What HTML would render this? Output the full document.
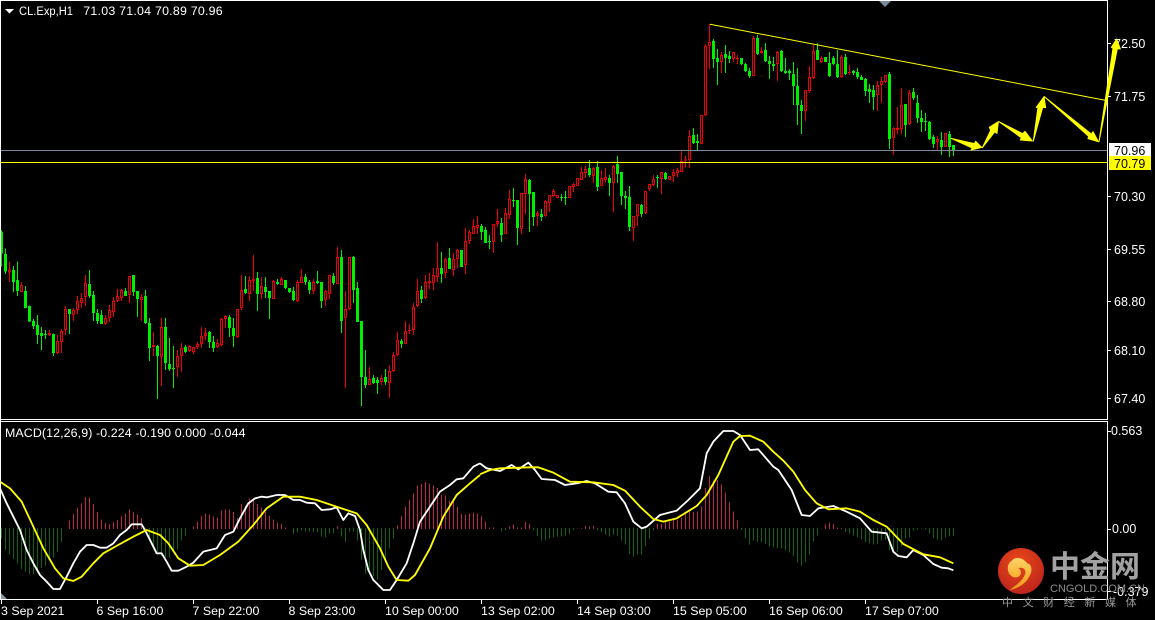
<!DOCTYPE html>
<html lang="zh"><head><meta charset="utf-8"><title>CL.Exp,H1</title>
<style>
html,body{margin:0;padding:0;background:#000;width:1155px;height:620px;overflow:hidden}
svg{display:block}
.c path{fill:none;shape-rendering:crispEdges}
.gw{stroke:#00ee00;stroke-width:3}.gb{stroke:#00ee00;stroke-width:9}
.rw{stroke:#f00000;stroke-width:3}.rb{stroke:#f00000;stroke-width:9}.ri{stroke:#000;stroke-width:3}
.hr{fill:none;stroke:#c0254a;stroke-width:3;shape-rendering:crispEdges}.hg{fill:none;stroke:#0f640f;stroke-width:3;shape-rendering:crispEdges}
.lw{fill:none;stroke:#fff;stroke-width:5.5;stroke-linejoin:round}.ly{fill:none;stroke:#ff0;stroke-width:5.5;stroke-linejoin:round}
text{font-family:"Liberation Sans","Noto Sans CJK SC",sans-serif;font-size:12.4px;fill:#fff}
.ax{font-size:12.5px}
</style></head><body>
<svg width="1155" height="620" viewBox="0 0 1155 620" xmlns="http://www.w3.org/2000/svg">
<rect width="1155" height="620" fill="#000"/>

<g class="c" transform="scale(.33333)">
<path class="gw" d="M4.5 30V140M16.5 85V162M40.5 138V216M52.5 124V228M76.5 198V264M88.5 256V306M100.5 297V327M112.5 285V372M124.5 321V390M136.5 330V357M160.5 340V408M208.5 267V342M268.5 150V234M280.5 213V303M292.5 267V312M304.5 270V312M376.5 204V228M400.5 165V228M412.5 213V291M436.5 210V312M448.5 294V423M472.5 375V537M496.5 294V450M508.5 354V453M520.5 378V504M556.5 375V399M628.5 333V384M640.5 348V396M688.5 285V351M700.5 294V381M736.5 168V222M772.5 156V273M796.5 171V234M808.5 213V297M832.5 177V195M856.5 180V207M868.5 204V219M880.5 201V243M916.5 162V195M928.5 180V222M952.5 153V192M964.5 186V264M1000.5 159V195M1024.5 90V339M1060.5 108V249M1072.5 186V306M1084.5 303V558M1096.5 390V504M1120.5 465V492M1132.5 471V522M1156.5 447V495" transform="translate(0,660)"/>
<path class="gb" d="M4.5 36V100M16.5 102V155M40.5 150V186M52.5 180V213M76.5 213V264M88.5 258V304M100.5 303V318M112.5 315V345M124.5 339V348M136.5 342V345M160.5 342V399M208.5 267V282M268.5 192V228M280.5 225V279M292.5 279V303M304.5 285V312M376.5 213V228M400.5 165V216M412.5 213V237M436.5 228V309M448.5 309V384M472.5 378V408M496.5 321V429M508.5 432V447M520.5 444V447M556.5 381V396M628.5 336V366M640.5 366V384M688.5 291V324M700.5 324V348M736.5 207V219M772.5 174V222M796.5 201V216M808.5 213V234M832.5 186V192M856.5 180V204M868.5 204V216M880.5 213V240M916.5 171V186M928.5 186V210M952.5 183V189M964.5 186V243M1000.5 168V189M1024.5 111V303M1060.5 111V210M1072.5 204V306M1084.5 303V471M1096.5 471V495M1120.5 474V489M1132.5 480V489M1156.5 471V486" transform="translate(0,660)"/>
<path class="rw" d="M28.5 124V186M64.5 186V216M148.5 330V348M172.5 345V402M184.5 327V399M196.5 258V345M220.5 264V303M232.5 228V282M244.5 219V264M256.5 165V258M316.5 285V315M328.5 255V306M340.5 231V291M352.5 207V246M364.5 207V243M388.5 168V249M424.5 222V303M460.5 336V408M484.5 294V498M532.5 390V471M544.5 369V456M568.5 375V396M580.5 381V402M592.5 366V387M604.5 321V384M616.5 324V360M652.5 357V384M664.5 294V378M676.5 285V324M712.5 267V354M724.5 165V270M748.5 168V243M760.5 105V213M784.5 171V237M820.5 180V237M844.5 171V195M892.5 180V246M904.5 147V189M940.5 177V222M976.5 210V258M988.5 165V237M1012.5 81V192M1036.5 213V504M1048.5 111V270M1108.5 441V495M1144.5 465V495M1168.5 435V534M1180.5 396V456M1192.5 336V408" transform="translate(0,660)"/>
<path class="rb" d="M28.5 148V158M64.5 195V216M148.5 339V345M172.5 363V399M184.5 333V366M196.5 267V330M220.5 270V285M232.5 243V270M244.5 234V249M256.5 189V231M316.5 294V312M328.5 270V294M340.5 243V276M352.5 228V243M364.5 210V234M388.5 168V225M424.5 231V240M460.5 375V381M484.5 321V411M532.5 408V441M544.5 384V408M568.5 378V393M580.5 381V396M592.5 372V381M604.5 348V372M616.5 339V348M652.5 369V381M664.5 297V375M676.5 288V297M712.5 267V351M724.5 210V264M748.5 180V222M760.5 177V183M784.5 198V222M820.5 183V237M844.5 177V195M892.5 186V243M904.5 171V189M940.5 186V213M976.5 213V240M988.5 165V222M1012.5 111V192M1036.5 267V294M1048.5 111V267M1108.5 477V495M1144.5 474V486M1168.5 453V489M1180.5 405V453M1192.5 360V405" transform="translate(0,660)"/>
<path class="ri" d="M28.5 151V155M64.5 198V213M172.5 366V396M184.5 336V363M196.5 270V327M220.5 273V282M232.5 246V267M244.5 237V246M256.5 192V228M316.5 297V309M328.5 273V291M340.5 246V273M352.5 231V240M364.5 213V231M388.5 171V222M424.5 234V237M484.5 324V408M532.5 411V438M544.5 387V405M568.5 381V390M580.5 384V393M592.5 375V378M604.5 351V369M616.5 342V345M652.5 372V378M664.5 300V372M676.5 291V294M712.5 270V348M724.5 213V261M748.5 183V219M784.5 201V219M820.5 186V234M844.5 180V192M892.5 189V240M904.5 174V186M940.5 189V210M976.5 216V237M988.5 168V219M1012.5 114V189M1036.5 270V291M1048.5 114V264M1108.5 480V492M1144.5 477V483M1168.5 456V486M1180.5 408V450M1192.5 363V402" transform="translate(0,660)"/>
</g>

<g class="c" transform="translate(395,230) scale(.33333)">
<path class="gw" d="M19.5 327V354M79.5 168V219M139.5 66V159M163.5 54V117M199.5 60V111"/>
<path class="gb" d="M19.5 333V342M79.5 180V207M139.5 114V132M163.5 84V117M199.5 60V111"/>
<path class="rw" d="M31.5 273V342M43.5 282V312M55.5 219V315M67.5 147V231M91.5 135V207M103.5 129V177M115.5 114V180M127.5 36V156M151.5 84V144M175.5 69V138M187.5 57V114"/>
<path class="rb" d="M31.5 303V342M43.5 300V303M55.5 231V300M67.5 183V228M91.5 156V204M103.5 153V159M115.5 135V159M127.5 114V141M151.5 87V129M175.5 87V120M187.5 60V87"/>
<path class="ri" d="M31.5 306V339M55.5 234V297M67.5 186V225M91.5 159V201M115.5 138V156M127.5 117V138M151.5 90V126M175.5 90V117M187.5 63V84"/>
</g>

<g class="c" transform="translate(400,120) scale(.33333)">
<path class="gw" d="M244.5 312V360M256.5 321V369M268.5 345V387M304.5 294V366M340.5 204V261M352.5 240V375M388.5 177V336M400.5 216V318M424.5 267V303M484.5 222V243M496.5 213V255M568.5 120V171M592.5 123V213M628.5 165V228M652.5 108V189M664.5 156V255M676.5 213V267M688.5 198V333M724.5 252V291M772.5 165V204M796.5 156V180"/>
<path class="gb" d="M244.5 318V336M256.5 330V369M268.5 363V366M304.5 309V345M340.5 240V243M352.5 240V324M388.5 180V222M400.5 216V291M424.5 282V291M484.5 231V234M496.5 231V234M568.5 144V165M592.5 141V201M628.5 174V189M652.5 132V162M664.5 156V228M676.5 228V234M688.5 231V321M724.5 255V282M772.5 171V174M796.5 159V177"/>
<path class="rw" d="M196.5 324V462M208.5 330V372M220.5 297V342M232.5 288V342M280.5 312V399M292.5 267V321M316.5 264V342M328.5 210V297M364.5 219V342M376.5 162V282M412.5 273V318M436.5 240V291M448.5 225V276M460.5 207V231M472.5 225V234M508.5 198V234M520.5 189V216M532.5 174V198M544.5 141V180M556.5 138V174M580.5 141V189M604.5 150V198M616.5 144V189M640.5 135V276M700.5 288V363M712.5 252V318M736.5 213V282M748.5 192V213M760.5 165V198M784.5 156V222M808.5 168V180M820.5 147V186M832.5 144V171"/>
<path class="rb" d="M196.5 363V435M208.5 336V363M220.5 318V342M232.5 315V324M280.5 312V366M292.5 303V312M316.5 279V342M328.5 237V285M364.5 219V327M376.5 177V222M412.5 279V288M436.5 243V288M448.5 225V249M460.5 213V228M472.5 225V234M508.5 198V234M520.5 192V201M532.5 174V198M544.5 156V180M556.5 147V159M580.5 144V168M604.5 174V198M616.5 171V180M640.5 138V189M700.5 288V324M712.5 252V288M736.5 213V279M748.5 192V207M760.5 177V195M784.5 156V177M808.5 168V180M820.5 156V168M832.5 150V159"/>
<path class="ri" d="M196.5 366V432M208.5 339V360M220.5 321V339M232.5 318V321M280.5 315V363M292.5 306V309M316.5 282V339M328.5 240V282M364.5 222V324M376.5 180V219M412.5 282V285M436.5 246V285M448.5 228V246M460.5 216V225M472.5 228V231M508.5 201V231M520.5 195V198M532.5 177V195M544.5 159V177M556.5 150V156M580.5 147V165M604.5 177V195M616.5 174V177M640.5 141V186M700.5 291V321M712.5 255V285M736.5 216V276M748.5 195V204M760.5 180V192M784.5 159V174M808.5 171V177M820.5 159V165M832.5 153V156"/>
</g>

<g class="c" transform="translate(680,0) scale(.33333)">
<path class="gw" d="M40.5 384V432M52.5 402V450M100.5 117V204M112.5 147V255M136.5 135V219M148.5 153V189M184.5 174V195M196.5 189V216M208.5 204V234M232.5 105V165M256.5 129V186M268.5 168V237M280.5 171V213M304.5 150V216M316.5 174V222M328.5 207V240M340.5 186V315M352.5 204V375M364.5 300V402M412.5 129V180M436.5 171V186M448.5 156V231M460.5 168V195M472.5 150V234M496.5 162V225M520.5 210V225M532.5 204V237M544.5 225V240M556.5 234V288M568.5 252V309M580.5 255V330M628.5 216V447M676.5 312V411M700.5 264V300M712.5 285V369M724.5 330V396M736.5 339V393M748.5 363V420M760.5 405V444M784.5 396V465M808.5 393V471M820.5 435V468"/>
<path class="gb" d="M40.5 405V429M52.5 423V429M100.5 123V177M112.5 174V186M136.5 162V174M148.5 168V177M184.5 174V192M196.5 192V213M208.5 213V228M232.5 114V162M256.5 150V183M268.5 183V192M280.5 192V198M304.5 153V213M316.5 213V219M328.5 213V219M340.5 222V258M352.5 258V315M364.5 315V333M412.5 150V180M436.5 171V186M448.5 189V228M460.5 174V192M472.5 192V231M496.5 171V222M520.5 213V219M532.5 216V231M544.5 231V240M556.5 237V273M568.5 267V276M580.5 270V291M628.5 222V417M676.5 312V375M700.5 276V294M712.5 309V354M724.5 354V366M736.5 363V366M748.5 366V417M760.5 411V432M784.5 420V441M808.5 402V441M820.5 435V453"/>
<path class="rw" d="M4.5 450V516M16.5 467V503M28.5 390V504M64.5 345V432M76.5 132V348M88.5 72V207M124.5 156V219M160.5 156V186M172.5 165V192M220.5 108V228M244.5 141V162M292.5 153V243M376.5 270V363M388.5 198V279M400.5 135V237M424.5 168V189M484.5 165V234M508.5 195V225M592.5 243V333M604.5 231V309M616.5 225V249M640.5 381V465M652.5 321V402M664.5 264V402M688.5 270V375M772.5 408V453M796.5 399V441"/>
<path class="rb" d="M4.5 483V516M16.5 478V481M28.5 408V480M64.5 345V432M76.5 138V345M88.5 126V138M124.5 165V186M160.5 156V177M172.5 174V177M220.5 114V228M244.5 153V159M292.5 156V192M376.5 270V333M388.5 231V273M400.5 153V234M424.5 174V186M484.5 171V231M508.5 216V219M592.5 255V285M604.5 243V255M616.5 225V246M640.5 384V414M652.5 384V390M664.5 315V387M688.5 279V372M772.5 417V426M796.5 399V441"/>
<path class="ri" d="M4.5 486V513M28.5 411V477M64.5 348V429M76.5 141V342M88.5 129V135M124.5 168V183M160.5 159V174M220.5 117V225M292.5 159V189M376.5 273V330M388.5 234V270M400.5 156V231M424.5 177V183M484.5 174V228M592.5 258V282M604.5 246V252M616.5 228V243M640.5 387V411M664.5 318V384M688.5 282V369M772.5 420V423M796.5 402V438"/>
</g>

<!-- horizontal levels and trend line -->
<path d="M1 150.5H1108" stroke="#7a8a9c" stroke-width="1" shape-rendering="crispEdges"/>
<path d="M1 162.5H1108" stroke="#ffff00" stroke-width="1" shape-rendering="crispEdges"/>
<path d="M710 24.3L1107 100.6" stroke="#ffff00" stroke-width="1"/>

<!-- MACD histogram and lines -->
<g transform="translate(0,420) scale(.33333)">
<path class="hg" d="M4.5 324V355M16.5 324V388M28.5 324V403M40.5 324V417M52.5 324V430M64.5 324V447M76.5 324V454M88.5 324V462M100.5 324V462M112.5 324V457M124.5 324V444M136.5 324V436M148.5 324V420M160.5 324V412M172.5 324V396M184.5 324V366M448.5 324V352M460.5 324V384M472.5 324V396M484.5 324V408M496.5 324V412M508.5 324V412M520.5 324V396M532.5 324V388M544.5 324V362M556.5 324V346M880.5 324V342M892.5 324V336M904.5 324V332M916.5 324V334M928.5 324V334M940.5 324V336M952.5 324V338M964.5 324V350M976.5 324V352M988.5 324V340M1000.5 324V340M1024.5 324V350M1036.5 324V366M1048.5 324V334M1060.5 324V334M1072.5 324V362M1084.5 324V418M1096.5 324V462M1108.5 324V462M1120.5 324V468M1132.5 324V478M1144.5 324V450M1156.5 324V420M1168.5 324V386M1180.5 324V356"/>
<path class="hr" d="M208.5 302V327M220.5 282V327M232.5 264V327M244.5 250V327M256.5 231V327M268.5 232V327M280.5 252V327M292.5 276V327M304.5 298V327M316.5 309V327M328.5 312V327M340.5 306V327M352.5 300V327M364.5 288V327M376.5 280V327M388.5 268V327M400.5 276V327M412.5 284V327M424.5 294V327M436.5 325V327M580.5 320V327M592.5 304V327M604.5 288V327M616.5 280V327M628.5 284V327M640.5 290V327M652.5 292V327M664.5 272V327M676.5 268V327M688.5 268V327M700.5 276V327M712.5 294V327M724.5 252V327M736.5 256V327M748.5 236V327M760.5 238V327M772.5 252V327M784.5 262V327M796.5 276V327M808.5 288V327M820.5 298V327M832.5 308V327M844.5 312V327M856.5 322V327M1012.5 320V327M1192.5 316V327M1204.5 288V327M1216.5 260V327M1228.5 240V327M1240.5 220V327M1252.5 196V327M1264.5 192V327M1276.5 186V327M1288.5 190V327M1300.5 196V327M1312.5 204V327M1324.5 224V327M1336.5 226V327M1348.5 242V327M1360.5 244V327M1372.5 260V327M1384.5 282V327M1396.5 284V327M1408.5 280V327M1420.5 278V327M1432.5 280V327"/>
<polyline class="lw" points="0,205 20,250 40,290 60,330 80,390 100,430 120,465 140,485 160,507 180,507 200,470 220,430 240,395 260,375 280,375 300,383 320,383 340,370 360,345 380,330 395,313 425,313 440,340 455,370 470,400 485,400 500,425 515,452 535,452 560,440 580,428 610,395 650,385 675,345 700,335 720,295 745,250 765,235 785,230 800,232 830,225 855,225 880,240 900,240 920,248 945,250 965,270 990,268 1010,262 1030,300 1045,280 1065,288 1080,330 1090,390 1105,450 1120,480 1150,510 1170,510 1190,480 1220,430 1240,370 1260,305 1290,260 1320,215 1350,195 1370,178 1390,175 1420,140 1440,130"/>
<polyline class="ly" points="0,185 30,205 65,245 100,320 130,385 165,445 190,475 220,483 245,470 280,430 310,400 360,372 400,350 440,330 480,345 505,370 535,415 570,437 610,435 660,405 715,365 760,315 800,265 850,230 900,230 950,240 1000,257 1070,280 1100,315 1140,385 1165,440 1190,480 1225,482 1245,465 1290,385 1330,290 1370,225 1410,190 1440,165"/>
</g>
<g transform="translate(480,420) scale(.33333)">
<path class="hr" d="M4.5 288V327M16.5 305V327M28.5 322V327M40.5 322V327M88.5 320V327M100.5 314V327M112.5 322V327M124.5 322V327M136.5 306V327M148.5 312V327M292.5 325V327M304.5 325V327M316.5 318V327M328.5 320V327M340.5 318V327M532.5 310V327M544.5 312V327M556.5 306V327M568.5 304V327M580.5 300V327M592.5 298V327M604.5 292V327M616.5 282V327M628.5 274V327M640.5 276V327M652.5 274V327M664.5 260V327M676.5 204V327M688.5 168V327M700.5 182V327M712.5 180V327M724.5 194V327M736.5 218V327M748.5 246V327M760.5 274V327M772.5 302V327M1036.5 314V327M1048.5 308V327M1060.5 312V327M1072.5 322V327M1084.5 324V327"/>
<path class="hg" d="M64.5 324V335M76.5 324V332M160.5 324V332M172.5 324V348M184.5 324V362M196.5 324V360M208.5 324V356M220.5 324V352M232.5 324V350M244.5 324V350M256.5 324V346M268.5 324V340M280.5 324V330M352.5 324V332M364.5 324V336M376.5 324V344M388.5 324V350M400.5 324V344M412.5 324V346M424.5 324V362M436.5 324V374M448.5 324V402M460.5 324V410M472.5 324V404M484.5 324V404M496.5 324V380M508.5 324V356M520.5 324V332M784.5 324V330M796.5 324V354M808.5 324V374M820.5 324V362M832.5 324V366M844.5 324V366M856.5 324V372M868.5 324V380M880.5 324V382M892.5 324V384M904.5 324V386M916.5 324V392M928.5 324V398M940.5 324V408M952.5 324V428M964.5 324V436M976.5 324V426M988.5 324V404M1000.5 324V364M1012.5 324V346M1024.5 324V326M1096.5 324V336M1108.5 324V340M1120.5 324V346M1132.5 324V352M1144.5 324V358M1156.5 324V366M1168.5 324V370M1180.5 324V374M1192.5 324V372M1204.5 324V362M1216.5 324V360M1228.5 324V390M1240.5 324V400M1252.5 324V396M1264.5 324V380M1276.5 324V356M1288.5 324V352M1300.5 324V332M1312.5 324V328M1324.5 324V325M1336.5 324V328M1348.5 324V340M1360.5 324V354M1372.5 324V358M1384.5 324V362M1396.5 324V352M1408.5 324V348M1420.5 324V348"/>
<polyline class="lw" points="0,130 20,145 60,153 95,135 115,148 145,128 165,150 185,177 225,180 255,195 290,190 320,183 345,190 385,215 410,217 435,250 460,305 485,325 500,320 540,285 590,272 625,240 660,205 680,100 700,65 730,33 760,33 780,45 810,90 835,88 880,140 895,150 935,210 965,285 990,288 1015,265 1060,258 1100,275 1140,295 1175,335 1220,340 1240,395 1255,408 1280,412 1300,390 1330,405 1360,432 1385,443 1405,445 1420,451"/>
<polyline class="ly" points="0,163 30,150 60,145 150,142 175,142 220,158 270,185 340,187 400,195 435,212 480,260 520,297 550,305 590,295 650,258 680,225 715,165 760,65 780,48 810,47 850,65 880,95 910,122 940,155 975,210 1010,250 1045,268 1100,265 1140,275 1180,300 1220,320 1270,372 1330,403 1380,412 1420,430"/>
</g>

<!-- frame -->
<g stroke="#fff" stroke-width="1" shape-rendering="crispEdges" fill="none">
<path d="M0 .5H1108M0 419.5H1108M0 421.5H1108M0 599.5H1108M.5 0V600M1107.5 0V420M1107.5 421V600"/>
<path d="M1108 43.500H1111M1108 96.500H1111M1108 196.500H1111M1108 249.500H1111M1108 301.500H1111M1108 350.500H1111M1108 398.500H1111M1108 431.500H1111M1108 529.500H1111M1108 591.500H1111"/>
<path d="M1.5 599V604M97.5 599V604M193.5 599V604M289.5 599V604M385.5 599V604M481.5 599V604M577.5 599V604M673.5 599V604M769.5 599V604M865.5 599V604"/>
</g>

<!-- markers -->
<polygon points="879,1 891,1 885,7" fill="#7a8a9c"/>
<polygon points="1,593 1,599 7,599" fill="#8a99a8"/>
<polygon points="5,9 14,9 9.5,13.5" fill="#fff"/>

<!-- labels -->
<text x="19" y="15" textLength="54" lengthAdjust="spacingAndGlyphs">CL.Exp,H1</text>
<text x="83.300" y="15" textLength="139.400">71.03 71.04 70.89 70.96</text>
<text x="5" y="437" textLength="240.500">MACD(12,26,9) -0.224 -0.190 0.000 -0.044</text>

<text class="ax" x="1114" y="48">72.50</text>
<text class="ax" x="1114" y="101">71.75</text>
<text class="ax" x="1114" y="201">70.30</text>
<text class="ax" x="1114" y="254">69.55</text>
<text class="ax" x="1114" y="306">68.80</text>
<text class="ax" x="1114" y="355">68.10</text>
<text class="ax" x="1114" y="403">67.40</text>
<text class="ax" x="1111" y="435">0.563</text>
<text class="ax" x="1112" y="533">0.00</text>
<rect x="1109" y="143" width="42" height="13" fill="#fff"/>
<rect x="1109" y="156" width="42" height="14" fill="#ff0"/>
<text class="ax" x="1114" y="155" style="fill:#000">70.96</text>
<text class="ax" x="1114" y="168" style="fill:#000">70.79</text>

<text x="1" y="615">3 Sep 2021</text>
<text x="96.500" y="615">6 Sep 16:00</text>
<text x="192.500" y="615">7 Sep 22:00</text>
<text x="288.500" y="615">8 Sep 23:00</text>
<text x="385" y="615">10 Sep 00:00</text>
<text x="481" y="615">13 Sep 02:00</text>
<text x="577" y="615">14 Sep 03:00</text>
<text x="673" y="615">15 Sep 05:00</text>
<text x="769" y="615">16 Sep 06:00</text>
<text x="865" y="615">17 Sep 07:00</text>

<!-- arrows -->
<g transform="translate(945,30) scale(.33333)" fill="#ffff00" stroke="#ffff00" stroke-width="3" stroke-linejoin="round">
<polygon points="18,325 88,341 92,334 110,352 78,360 82,354"/>
<polygon points="112,353 137,301 133,292 160,275 156,310 149,306"/>
<polygon points="162,275 233,311 240,304 262,333 226,330 229,323"/>
<polygon points="265,333 279,232 274,232 297,200 302,233 293,232"/>
<polygon points="298,200 439,312 444,305 460,335 429,326 431,319"/>
<polygon points="462,335 504,55 499,52 515,27 526,57 517,56"/>
</g>

<!-- logo -->
<defs>
<radialGradient id="lg" cx=".45" cy=".3" r=".8"><stop offset="0" stop-color="#e8481a"/><stop offset="1" stop-color="#b8201a"/></radialGradient>
<linearGradient id="sw" x1="0" y1="0" x2="0" y2="1"><stop offset="0" stop-color="#fbd46a"/><stop offset=".6" stop-color="#f8b030"/><stop offset="1" stop-color="#f09020"/></linearGradient>
</defs>
<circle cx="1021" cy="571" r="23" fill="url(#lg)"/>
<g transform="translate(990,540) scale(.33333)">
<path style="fill:url(#sw)" d="M75 55C95 50 105 62 112 70C125 72 128 92 120 105C112 125 90 145 58 150C80 135 100 120 106 100C108 85 95 80 85 85C92 88 96 98 90 106C80 118 62 112 56 98C50 82 55 68 66 62C68 58 72 56 75 55Z"/>
</g>
<text x="1050" y="577" style="font-size:30px;font-weight:700;fill:#a2a2a2;font-family:'Noto Sans CJK SC',sans-serif">中金网</text>
<text x="1113" y="596" class="ax">-0.379</text>
<text x="1050" y="592" textLength="95" style="font-size:11px;fill:#8c8c8c">CNGOLD.COM.CN</text>
<text x="1002 1022.600 1043.200 1063.800 1084.400 1105 1125.600" y="606" style="font-size:11px;fill:#9a9a9a;font-family:'Noto Sans CJK SC',sans-serif">中文财经新媒体</text>
</svg>
</body></html>
